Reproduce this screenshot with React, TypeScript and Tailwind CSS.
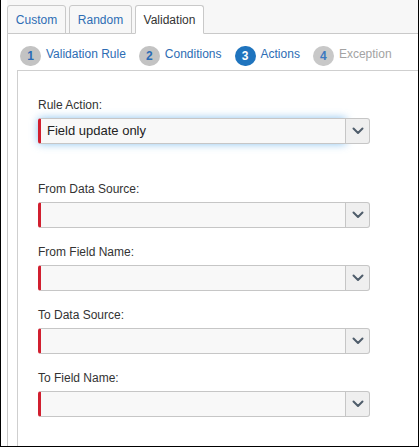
import React from "react";

function Chevron() {
  return (
    <svg width="12" height="8" viewBox="0 0 12 8" fill="none">
      <path d="M1.5 1.5 L6 6 L10.5 1.5" stroke="#4f5d6b" strokeWidth="2" strokeLinecap="round" strokeLinejoin="round" />
    </svg>
  );
}

function Select({ value, focused }: { value?: string; focused?: boolean }) {
  return (
    <div className="flex w-[332px] h-[26px]">
      <div
        className={
          "flex-1 flex items-center h-full bg-[#f8f8f8] border border-[#c6c6c6] border-l-[3px] border-l-[#d11f2f] rounded-l-[3px] pl-[6px] text-[13px] text-[#222] " +
          (focused ? "shadow-[0_0_8px_rgba(102,175,233,0.75)]" : "")
        }
      >
        {value}
      </div>
      <div className="w-[24px] h-full bg-[#efefef] border border-l-0 border-[#c6c6c6] rounded-r-[3px] flex items-center justify-center">
        <Chevron />
      </div>
    </div>
  );
}

function Field({ label, value, focused, className }: { label: string; value?: string; focused?: boolean; className?: string }) {
  return (
    <div className={"flex flex-col " + (className || "")}>
      <div className="text-[12px] leading-[14px] text-[#333] mb-[6px]">{label}</div>
      <Select value={value} focused={focused} />
    </div>
  );
}

function Step({ n, label, state }: { n: number; label: string; state: "done" | "active" | "disabled" }) {
  const circle =
    state === "active"
      ? "bg-[#1f74be] text-white"
      : state === "disabled"
      ? "bg-[#c8c8c8] text-[#3b79c0]"
      : "bg-[#c3c3c3] text-[#2a6bb5]";
  const text = state === "disabled" ? "text-[#a3a3a3]" : "text-[#2d6db4]";
  return (
    <div className="flex items-center">
      <div className={"w-[21px] h-[20px] rounded-full flex items-center justify-center text-[12px] font-bold " + circle}>
        {n}
      </div>
      <span className={"ml-[5px] text-[12px] leading-[14px] pb-[4px] " + text}>{label}</span>
    </div>
  );
}

export default function App() {
  return (
    <div className="w-[419px] h-[447px] bg-white border-l border-r border-b border-black overflow-hidden pl-[6px] font-['Liberation_Sans',Arial,sans-serif]">
      <div className="flex flex-col h-full">
        <div className="h-[34px] shrink-0 bg-[#f7f7f7] border-b border-[#c9c9c9] flex items-end gap-[3px]">
          <div className="-mb-px w-[59px] h-[29px] bg-[#f7f7f7] border border-[#c9c9c9] rounded-t-[3px] flex items-center justify-center text-[12px] text-[#2d6db4]">
            Custom
          </div>
          <div className="-mb-px w-[63px] h-[29px] bg-[#f7f7f7] border border-[#c9c9c9] rounded-t-[3px] flex items-center justify-center text-[12px] text-[#2d6db4]">
            Random
          </div>
          <div className="-mb-px w-[69px] h-[29px] bg-white border border-[#c9c9c9] border-b-white rounded-t-[3px] flex items-center justify-center text-[12px] text-[#333]">
            Validation
          </div>
        </div>
        <div className="flex-1 border-l border-[#c9c9c9] flex flex-col">
          <div className="h-[20px] mt-[12px] pl-[12px] flex items-center gap-[13px]">
            <Step n={1} label="Validation Rule" state="done" />
            <Step n={2} label="Conditions" state="done" />
            <Step n={3} label="Actions" state="active" />
            <Step n={4} label="Exception" state="disabled" />
          </div>
          <div className="flex-1 mt-[4px] ml-[9px] border-t border-l border-[#cfcfcf] pl-[20px] pt-[27px] flex flex-col">
            <Field label="Rule Action:" value="Field update only" focused />
            <Field label="From Data Source:" className="mt-[38px]" />
            <Field label="From Field Name:" className="mt-[17px]" />
            <Field label="To Data Source:" className="mt-[17px]" />
            <Field label="To Field Name:" className="mt-[17px]" />
          </div>
        </div>
      </div>
    </div>
  );
}
